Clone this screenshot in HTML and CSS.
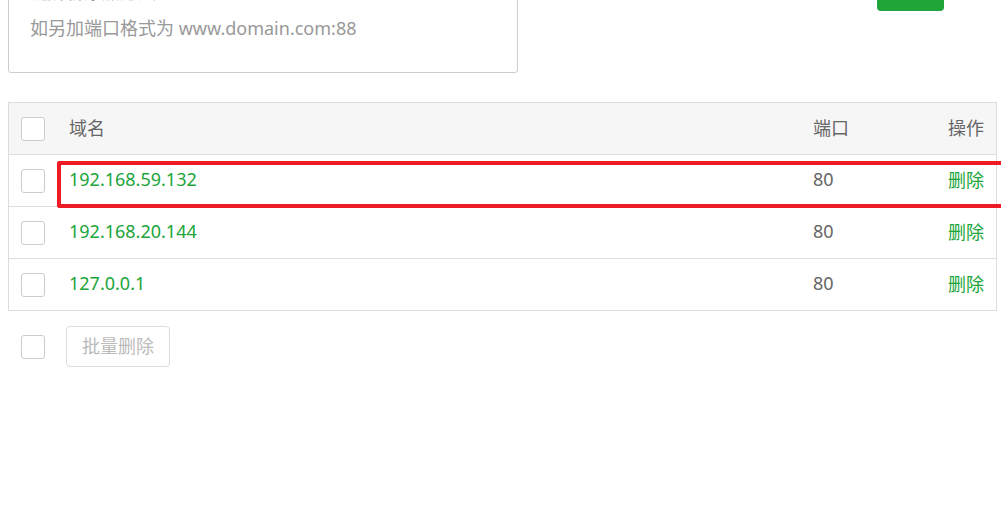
FILE: index.html
```html
<!DOCTYPE html>
<html lang="zh-CN">
<head>
<meta charset="utf-8">
<title>域名管理</title>
<link rel="stylesheet" href="styles.css">
</head>
<body>
<div class="top">
  <div class="textarea">
    <div class="line">每行填写一个域名，默认为80端口</div>
    <div class="line">泛解析添加方法 *.domain.com</div>
    <div class="line">如另加端口格式为 www.domain.com:88</div>
  </div>
  <button class="btn-add">添加</button>
</div>

<div class="table">
  <div class="row head">
    <span class="cb"></span>
    <span class="cell">域名</span>
    <span class="cell">端口</span>
    <span class="cell act">操作</span>
  </div>
  <div class="row">
    <span class="cb"></span>
    <span class="cell domain">192.168.59.132</span>
    <span class="cell">80</span>
    <span class="cell act link">删除</span>
  </div>
  <div class="row">
    <span class="cb"></span>
    <span class="cell domain">192.168.20.144</span>
    <span class="cell">80</span>
    <span class="cell act link">删除</span>
  </div>
  <div class="row">
    <span class="cb"></span>
    <span class="cell domain">127.0.0.1</span>
    <span class="cell">80</span>
    <span class="cell act link">删除</span>
  </div>
</div>

<div class="footer">
  <span class="cb"></span>
  <button class="btn-batch">批量删除</button>
</div>

<div class="highlight"></div>
</body>
</html>
```

FILE: styles.css
```css
html, body {
  margin: 0;
  padding: 0;
  overflow: hidden;
  background: #fff;
}
body {
  font-family: "Noto Sans", "Noto Sans CJK SC", sans-serif;
  font-size: 18px;
  color: #666;
  width: 1001px;
  height: 528px;
}
.top {
  display: flex;
  align-items: flex-start;
  margin-top: -60px;
  padding-left: 8px;
}
.textarea {
  box-sizing: border-box;
  width: 510px;
  height: 133px;
  border: 1px solid #ccc;
  border-radius: 3px;
  padding: 0 0 0 21px;
  color: #999;
}
.line {
  height: 36px;
  line-height: 36px;
  white-space: nowrap;
}
.line:first-child {
  margin-top: -3px;
}
.btn-add {
  margin: 27px 57px 0 auto;
  width: 67px;
  height: 44px;
  border: none;
  border-radius: 4px;
  background: #20a53a;
  color: #fff;
  font: inherit;
}
.table {
  margin: 29px 4px 0 8px;
  border: 1px solid #ddd;
}
.row {
  display: grid;
  grid-template-columns: 48px 1fr 135px auto;
  align-items: center;
  height: 51px;
  padding: 0 12px;
  border-top: 1px solid #ddd;
}
.row.head {
  border-top: none;
  background: #f6f6f6;
}
.cb {
  display: block;
  box-sizing: border-box;
  width: 24px;
  height: 24px;
  border: 1px solid #ccc;
  border-radius: 3px;
  background: #fff;
}
.cell {
  white-space: nowrap;
  padding-bottom: 4px;
}
.domain, .link {
  color: #20a53a;
}
.act {
  text-align: right;
}
.footer {
  display: flex;
  align-items: center;
  gap: 21px;
  margin-top: 15px;
  padding-left: 21px;
}
.btn-batch {
  box-sizing: border-box;
  width: 104px;
  height: 41px;
  border: 1px solid #ddd;
  border-radius: 4px;
  background: #fff;
  color: #bbb;
  font: inherit;
  padding: 0 0 3px;
}
.highlight {
  position: absolute;
  left: 57px;
  top: 161px;
  right: 0;
  height: 47px;
  box-sizing: border-box;
  border: 4px solid #ed1c24;
  border-right: none;
  border-radius: 3px 0 0 3px;
}
```
